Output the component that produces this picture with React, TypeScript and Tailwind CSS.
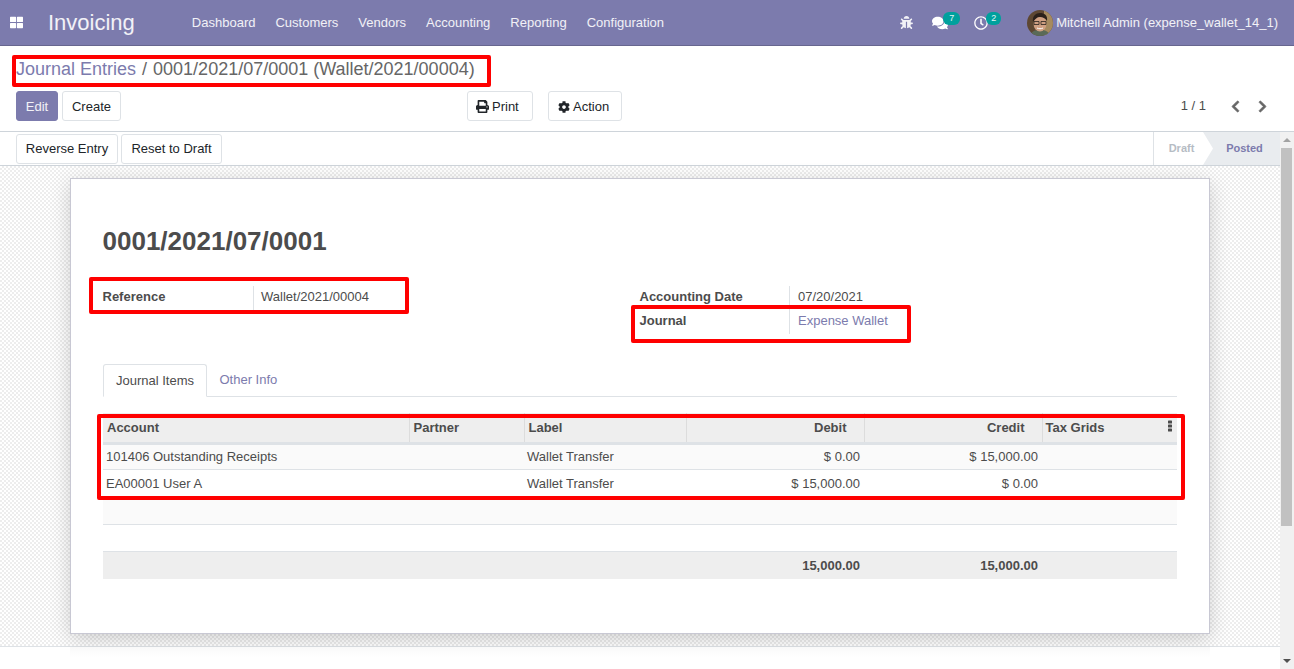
import React from "react";
import { FaBug, FaComments, FaPrint, FaCog, FaChevronLeft, FaChevronRight, FaThLarge, FaRegClock } from "react-icons/fa";

const Red = ({ c }: { c: string }) => <div className={`absolute border-4 border-[#ff0000] rounded-[2px] pointer-events-none ${c}`} />;

const Btn = ({ children, c = "" }: { children: React.ReactNode; c?: string }) => (
  <button className={`h-[30px] px-[9px] flex items-center justify-center whitespace-nowrap border border-[#dee2e6] rounded-[3px] bg-white text-[13px] text-[#212529] ${c}`}>{children}</button>
);

const rows = [
  { a: "101406 Outstanding Receipts", d: "$ 0.00", c: "$ 15,000.00", cls: "h-[26px] bg-[#fafafa]", td: "" },
  { a: "EA00001 User A", d: "$ 15,000.00", c: "$ 0.00", cls: "h-[28px] bg-white", td: "pt-[1px]" },
];

export default function App() {
  return (
    <div className="relative w-[1294px] h-[669px] overflow-hidden bg-white font-['Liberation_Sans',Arial,sans-serif] text-[13px] text-[#4c4c4c]">
      <header className="h-[46px] bg-[#7c7bad] border-b border-[#67668f] flex items-center text-white/90">
        <FaThLarge className="ml-[10px] w-[13px] h-[13px] text-white" />
        <span className="ml-[25px] text-[22px] leading-none">Invoicing</span>
        <nav className="ml-[57px] flex gap-[20px]">
          {["Dashboard", "Customers", "Vendors", "Accounting", "Reporting", "Configuration"].map((n) => (
            <span key={n}>{n}</span>
          ))}
        </nav>
        <div className="ml-auto flex items-center">
          <FaBug className="w-[13px] h-[13px] text-white/90" />
          <div className="relative ml-[19px] w-[43px] h-[26px] flex items-center">
            <FaComments className="w-[16px] h-[16px] text-white" />
            <span className="absolute left-[11px] top-[2px] w-[17px] h-[13px] rounded-[6px] bg-[#00a09d] text-[9px] leading-[13px] text-center text-white/90">7</span>
          </div>
          <div className="relative w-[52px] h-[26px] flex items-center">
            <FaRegClock className="-ml-[1px] w-[14px] h-[14px] text-white" />
            <span className="absolute left-[11px] top-[2px] w-[15px] h-[13px] rounded-[6px] bg-[#00a09d] text-[9px] leading-[13px] text-center text-white/90">2</span>
          </div>
          <svg viewBox="0 0 26 26" className="w-[26px] h-[26px] rounded-full">
            <rect width="26" height="26" fill="#5e4732" />
            <rect x="17" width="9" height="26" fill="#a68a5f" />
            <path d="M3 26c1-5 5-6 10-6s9 1 10 6z" fill="#5a6a58" />
            <ellipse cx="13" cy="13.5" rx="6.5" ry="8" fill="#cf9f82" />
            <path d="M6 12c-1-6 3-9 7-9s8 2 7 8c-2-3-4-4-7-4s-5 2-7 5z" fill="#2b201a" />
            <path d="M7 11.5h5v3H7zM14 11.5h5v3h-5z" fill="none" stroke="#2a2320" strokeWidth="0.8" />
            <path d="M10 18c2 1 4 1 6 0" stroke="#fff" strokeWidth="1" fill="none" />
          </svg>
          <span className="ml-[3px] mr-[16px]">Mitchell Admin (expense_wallet_14_1)</span>
        </div>
      </header>

      <section className="h-[86px] border-b border-[#ced4da] px-[16px] flex flex-col">
        <div className="mt-[12px] h-[22px] text-[18px] leading-[22px] text-[#666]">
          <span className="text-[#7c7bad]">Journal Entries</span>
          <span className="ml-[6px]">/</span>
          <span className="ml-[6px]">0001/2021/07/0001 (Wallet/2021/00004)</span>
        </div>
        <div className="mt-[11px] relative flex items-center">
          <Btn c="w-[42px] pt-[1px] !bg-[#7c7bad] !border-[#7c7bad] !text-white/90">Edit</Btn>
          <Btn c="ml-[4px] w-[59px] pt-[1px]">Create</Btn>
          <Btn c="ml-[346px] w-[66px] gap-[3px] pt-[1px] !px-0 !justify-start pl-[8px]!"><FaPrint className="w-[13px] h-[13px]" />Print</Btn>
          <Btn c="ml-[15px] w-[74px] gap-[3px] pt-[1px] !px-0 !justify-start pl-[9px]!"><FaCog className="w-[12px] h-[12px]" />Action</Btn>
          <span className="ml-auto text-[#4c4c4c]">1 / 1</span>
          <FaChevronLeft className="ml-[23px] w-[13px] h-[13px] text-[#666] stroke-current [stroke-width:30]" />
          <FaChevronRight className="ml-[14px] mr-[9px] w-[13px] h-[13px] text-[#666] stroke-current [stroke-width:30]" />
        </div>
      </section>

      <div className="flex h-[537px]">
        <main className="w-[1280px] flex flex-col">
          <div className="h-[34px] shrink-0 border-b border-[#ced4da] flex items-center pl-[16px]">
            <Btn c="h-[25px] w-[102px] px-0">Reverse Entry</Btn>
            <Btn c="h-[25px] w-[101px] ml-[3px] px-0">Reset to Draft</Btn>
            <div className="ml-auto h-full flex border-l border-[#dee2e6] text-[11px] font-bold">
              <span className="w-[49px] flex items-center justify-center pl-[6px] text-[#b6bcc4]">Draft</span>
              <span className="w-[77px] flex items-center justify-center pl-[6px] bg-[#e9ecef] text-[#7c7bad] [clip-path:polygon(0_0,100%_0,100%_100%,0_100%,10px_50%)]">Posted</span>
            </div>
          </div>

          <div className="h-[481px] shrink-0 border-b border-[#dee2e6] bg-[repeating-conic-gradient(#ededed_0_25%,#ffffff_0_50%)] bg-[length:4px_4px] px-[70px] pt-[12px]">
            <div className="w-[1140px] h-[456px] bg-white border border-[#c8c8d3] shadow-[0_5px_20px_-1px_rgba(0,0,0,0.2)] px-[32px] pt-[46px]">
              <h1 className="-ml-[0.5px] text-[26px] leading-[32px] font-bold text-[#4c4c4c]">0001/2021/07/0001</h1>

              <div className="mt-[29px] h-[78px] flex">
                <div className="w-[537px] -ml-[0.5px]">
                  <div className="flex h-[24px]">
                    <b className="w-[150px] pt-[1px]">Reference</b>
                    <span className="h-full border-l border-[#dee2e6] pl-[7.5px] pt-[1px]">Wallet/2021/00004</span>
                  </div>
                </div>
                <div>
                  <div className="flex h-[24px]">
                    <b className="w-[149px] pt-[1px]">Accounting Date</b>
                    <span className="h-full border-l border-[#dee2e6] pl-[8.5px] pt-[1px]">07/20/2021</span>
                  </div>
                  <div className="flex h-[24px]">
                    <b className="w-[149px] pt-[1px]">Journal</b>
                    <span className="h-full border-l border-[#dee2e6] pl-[8.5px] pt-[1px] text-[#7c7bad]">Expense Wallet</span>
                  </div>
                </div>
              </div>

              <div className="h-[33px] flex border-b border-[#dee2e6]">
                <span className="w-[104px] h-[33px] flex items-center justify-center border border-[#dee2e6] border-b-white rounded-t-[3px] bg-white">Journal Items</span>
                <span className="ml-[12.5px] flex items-center text-[#7c7bad]">Other Info</span>
              </div>

              <table className="mt-[16px] w-[1074px] table-fixed border-collapse">
                <colgroup>
                  <col className="w-[306px]" />
                  <col className="w-[115px]" />
                  <col className="w-[162px]" />
                  <col className="w-[178px]" />
                  <col className="w-[178px]" />
                  <col className="w-[135px]" />
                </colgroup>
                <thead>
                  <tr className="h-[30px] bg-[#eeeeee] border-b-[3px] border-[#dee2e6] font-bold">
                    <th className="text-left pl-[4px] border-r border-[#dcdcdc]">Account</th>
                    <th className="text-left pl-[4px] border-r border-[#dcdcdc]">Partner</th>
                    <th className="text-left pl-[4px] border-r border-[#dcdcdc]">Label</th>
                    <th className="text-right pr-[17px] border-r border-[#dcdcdc]">Debit</th>
                    <th className="text-right pr-[17px] border-r border-[#dcdcdc]">Credit</th>
                    <th className="relative text-left pl-[3px]">
                      Tax Grids
                      <svg viewBox="0 0 4 12" className="absolute right-[5px] top-[7px] w-[4px] h-[12px] fill-[#4c4c4c]">
                        <rect y="0.5" width="4" height="3" rx="0.6" />
                        <rect y="4.5" width="4" height="3" rx="0.6" />
                        <rect y="8.5" width="4" height="3" rx="0.6" />
                      </svg>
                    </th>
                  </tr>
                </thead>
                <tbody>
                  {rows.map((r) => (
                    <tr key={r.a} className={`border-b border-[#dee2e6] ${r.cls}`}>
                      <td className={`pl-[3px] ${r.td}`}>{r.a}</td>
                      <td />
                      <td className={`pl-[3px] ${r.td}`}>Wallet Transfer</td>
                      <td className={`text-right pr-[4px] ${r.td}`}>{r.d}</td>
                      <td className={`text-right pr-[4px] ${r.td}`}>{r.c}</td>
                      <td />
                    </tr>
                  ))}
                  <tr className="h-[27px] border-b border-[#dee2e6] bg-[#fafafa]"><td colSpan={6} /></tr>
                  <tr className="h-[27px] border-b border-[#dee2e6] bg-white"><td colSpan={6} /></tr>
                </tbody>
                <tfoot>
                  <tr className="h-[28px] bg-[#eeeeee] font-bold">
                    <td colSpan={3} />
                    <td className="text-right pr-[4px] pt-[1px]">15,000.00</td>
                    <td className="text-right pr-[4px] pt-[1px]">15,000.00</td>
                    <td />
                  </tr>
                </tfoot>
              </table>
            </div>
          </div>
          <div className="flex-1 bg-white pl-[70px] pr-[70px]">
            <div className="h-[10px] bg-gradient-to-b from-[#f9f9f9] to-white" />
          </div>
        </main>

        <aside className="relative w-[14px] bg-[#f1f1f1]">
          <span className="absolute left-[3px] top-[6px] w-0 h-0 border-x-[4px] border-x-transparent border-b-[4px] border-b-[#a3a3a3]" />
          <span className="absolute left-[1px] top-[16px] w-[11px] h-[378px] bg-[#c1c1c1]" />
          <span className="absolute left-[3px] bottom-[6px] w-0 h-0 border-x-[4px] border-x-transparent border-t-[4px] border-t-[#505050]" />
        </aside>
      </div>

      <Red c="left-[12px] top-[55px] w-[479px] h-[32px]" />
      <Red c="left-[89px] top-[277px] w-[320px] h-[37px]" />
      <Red c="left-[631px] top-[305px] w-[280px] h-[38px]" />
      <Red c="left-[97px] top-[414px] w-[1088px] h-[86px]" />
    </div>
  );
}
